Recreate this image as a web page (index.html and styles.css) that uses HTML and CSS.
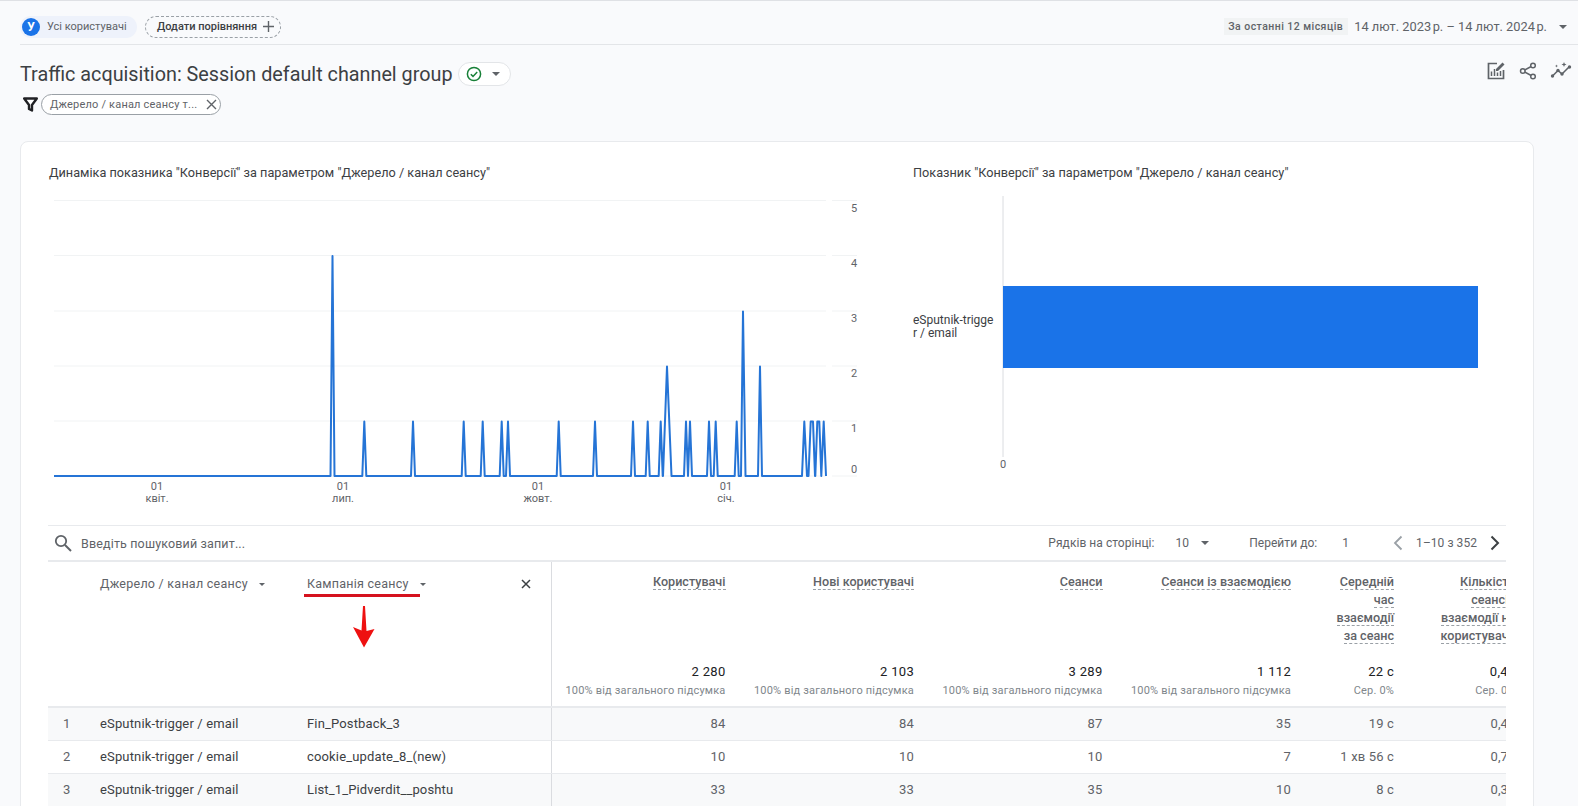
FILE: index.html
```html
<!DOCTYPE html>
<html lang="uk">
<head>
<meta charset="utf-8">
<title>Traffic acquisition</title>
<link rel="stylesheet" href="styles.css">
</head>
<body>
<header class="topbar">
  <div class="chip-user"><span class="avatar">У</span><span>Усі користувачі</span></div>
  <div class="chip-add"><span>Додати порівняння</span>
    <svg class="plus" width="11" height="11" viewBox="0 0 11 11"><path d="M5.500 0v11M0 5.500h11" stroke="#5f6368" stroke-width="1.400" fill="none"/></svg>
  </div>
  <div class="dates">
    <span class="period">За останні 12 місяців</span>
    <span class="range">14 лют. 2023&#8239;р. – 14 лют. 2024&#8239;р.</span>
    <span class="caret"></span>
  </div>
</header>

<section class="titlebar">
  <h1 class="title">Traffic acquisition: Session default channel group</h1>
  <div class="status">
    <svg width="16" height="16" viewBox="0 0 16 16"><circle cx="8" cy="8" r="6.600" fill="none" stroke="#188038" stroke-width="1.500"/><path d="M4.800 8.200l2.200 2.200 4.200-4.400" fill="none" stroke="#188038" stroke-width="1.500"/></svg>
    <span class="caret"></span>
  </div>
  <div class="actions">
    <svg width="20" height="20" viewBox="0 0 20 20"><path d="M11 2.500H2.500v15h15V9" fill="none" stroke="#5f6368" stroke-width="1.700"/><path d="M5.500 10.500v4.500M8.500 8v7M11.500 11.500V15M14.500 10v5" stroke="#5f6368" stroke-width="1.500" fill="none"/><path d="M10 8l6.500-6.500 2 2L12 10h-2z" fill="#5f6368"/></svg>
    <svg width="18" height="20" viewBox="0 0 18 20"><path d="M14 4.500L4 10l10 5.500" fill="none" stroke="#5f6368" stroke-width="1.500"/><circle cx="14" cy="4.500" r="2.300" fill="#f9fafc" stroke="#5f6368" stroke-width="1.500"/><circle cx="3.800" cy="10" r="2.300" fill="#f9fafc" stroke="#5f6368" stroke-width="1.500"/><circle cx="14" cy="15.500" r="2.300" fill="#f9fafc" stroke="#5f6368" stroke-width="1.500"/></svg>
    <svg width="22" height="20" viewBox="0 0 22 20"><path d="M2.500 15l5.500-5.500 4 3.500 7-7" fill="none" stroke="#5f6368" stroke-width="1.600"/><circle cx="2.500" cy="15" r="1.700" fill="#5f6368"/><circle cx="8" cy="9.500" r="1.700" fill="#5f6368"/><circle cx="12" cy="13" r="1.700" fill="#5f6368"/><circle cx="19.500" cy="6" r="1.700" fill="#5f6368"/><path d="M14 1l.7 1.800 1.800.7-1.800.7-.7 1.800-.7-1.800-1.800-.7 1.800-.7zM6.500 3.500l.4 1.100 1.100.4-1.100.4-.4 1.100-.4-1.100L5 5l1.100-.4z" fill="#5f6368"/></svg>
  </div>
</section>

<div class="filterbar">
  <svg width="15" height="15" viewBox="0 0 15 15"><path d="M1.200 1.500h12.600L9 8v5.500l-3-1.500V8z" fill="#fff" stroke="#202124" stroke-width="2.400" stroke-linejoin="round"/></svg>
  <div class="chip-filter">
    <span>Джерело / канал сеансу т...</span>
    <svg width="11" height="11" viewBox="0 0 11 11"><path d="M1 1l9 9M10 1l-9 9" stroke="#5f6368" stroke-width="1.400"/></svg>
  </div>
</div>

<main class="card">
  <div class="charts">
    <section class="panel panel-line">
      <h2 class="chart-title">Динаміка показника "Конверсії" за параметром "Джерело / канал сеансу"</h2>
      <svg class="chart" width="865" height="343" viewBox="48 182 865 343">
        <g class="grid">
          <path d="M54 200.500H826M54 255.500H826M54 311H826M54 366H826M54 421H826M54 476H826"/>
          <path d="M832 200.500H857M832 255.500H857M832 311H857M832 366H857M832 421H857M832 476H857"/>
        </g>
        <path class="series" d="M54 476H330.500L332.500 256L334.500 476H362.300L364.300 421.500L366.300 476H411L413 421.500L415 476H461.700L463.700 421.500L465.700 476H480.700L482.700 421.500L484.700 476H499.700L501.700 421.500L503.700 476H506L508 421.500L510 476H556.700L558.700 421.500L560.700 476H593L595 421.500L597 476H631L633 421.500L635 476H645.700L647.700 421.500L649.700 476H658.700L660.700 421.500L662.700 476H663L667 366.500L671.500 476H684L686 421.500L688 476L690 421.500L692 476H707L709 421.500L711 476H713.700L715.700 421.500L717.700 476H734.700L736.700 421.500L738.700 476H741L743 311.500L745.500 476H758L760 366.500L762 476H802L804.300 421.500L807 476H808.500L810.700 421.500H813L815 476H815.300L817.300 421.500H819.300L821.300 476L823.700 421.500L826 476"/>
        <g class="axis-y">
          <text x="854" y="212">5</text><text x="854" y="267">4</text><text x="854" y="322">3</text><text x="854" y="377">2</text><text x="854" y="432">1</text><text x="854" y="473">0</text>
        </g>
        <g class="axis-x">
          <text x="157" y="490">01</text><text x="157" y="502">квіт.</text>
          <text x="343" y="490">01</text><text x="343" y="502">лип.</text>
          <text x="538" y="490">01</text><text x="538" y="502">жовт.</text>
          <text x="726" y="490">01</text><text x="726" y="502">січ.</text>
        </g>
      </svg>
    </section>
    <section class="panel panel-bar">
      <h2 class="chart-title">Показник "Конверсії" за параметром "Джерело / канал сеансу"</h2>
      <svg class="chart" width="593" height="343" viewBox="913 182 593 343">
        <path class="axis-line" d="M1003 196V457"/>
        <rect class="bar" x="1003" y="286" width="475" height="82"/>
        <text class="bar-label" x="913" y="324">eSputnik-trigge</text>
        <text class="bar-label" x="913" y="337">r / email</text>
        <text class="bar-zero" x="1003" y="468">0</text>
      </svg>
    </section>
  </div>

  <div class="tablebar">
    <svg class="search" width="18" height="18" viewBox="0 0 18 18"><circle cx="7" cy="7" r="5.200" fill="none" stroke="#5f6368" stroke-width="1.800"/><path d="M11 11l6 6" stroke="#5f6368" stroke-width="2"/></svg>
    <span class="search-text">Введіть пошуковий запит...</span>
    <div class="pager">
      <span class="pager-label">Рядків на сторінці:</span>
      <span class="pager-size">10</span><span class="caret caret-dark"></span>
      <span class="pager-jump">Перейти до:</span>
      <span class="pager-page">1</span>
      <svg class="pager-prev" width="10" height="16" viewBox="0 0 10 16"><path d="M8.500 1.500L2 8l6.500 6.500" fill="none" stroke="#9aa0a6" stroke-width="1.800"/></svg>
      <span class="pager-count">1–10 з 352</span>
      <svg class="pager-next" width="10" height="16" viewBox="0 0 10 16"><path d="M1.500 1.500L8 8l-6.500 6.500" fill="none" stroke="#3c4043" stroke-width="2"/></svg>
    </div>
  </div>

  <div class="table-wrap">
    <table class="table">
      <colgroup>
        <col class="c-num"><col class="c-src"><col class="c-camp"><col class="c-m1"><col class="c-m2"><col class="c-m2"><col class="c-m2"><col class="c-m3"><col class="c-m4">
      </colgroup>
      <thead>
        <tr>
          <th></th>
          <th class="dim"><span>Джерело / канал сеансу</span><span class="caret"></span></th>
          <th class="dim dim-last"><span>Кампанія сеансу</span><span class="caret"></span>
            <svg class="close" width="10" height="10" viewBox="0 0 10 10"><path d="M1 1l8 8M9 1l-8 8" stroke="#3c4043" stroke-width="1.500"/></svg>
          </th>
          <th class="metric"><div class="label"><span>Користувачі</span></div><div class="total">2 280</div><div class="sub">100% від загального підсумка</div></th>
          <th class="metric"><div class="label"><span>Нові користувачі</span></div><div class="total">2 103</div><div class="sub">100% від загального підсумка</div></th>
          <th class="metric"><div class="label"><span>Сеанси</span></div><div class="total">3 289</div><div class="sub">100% від загального підсумка</div></th>
          <th class="metric"><div class="label"><span>Сеанси із взаємодією</span></div><div class="total">1 112</div><div class="sub">100% від загального підсумка</div></th>
          <th class="metric"><div class="label"><span>Середній<br>час<br>взаємодії<br>за сеанс</span></div><div class="total">22 с</div><div class="sub">Сер. 0%</div></th>
          <th class="metric"><div class="label"><span>Кількість<br>сеансів<br>взаємодії на<br>користувача</span></div><div class="total">0,49</div><div class="sub">Сер. 0%</div></th>
        </tr>
      </thead>
      <tbody>
        <tr class="row-a"><td class="num">1</td><td class="txt">eSputnik-trigger / email</td><td class="txt last">Fin_Postback_3</td><td class="val">84</td><td class="val">84</td><td class="val">87</td><td class="val">35</td><td class="val">19 с</td><td class="val">0,42</td></tr>
        <tr class="row-b"><td class="num">2</td><td class="txt">eSputnik-trigger / email</td><td class="txt last">cookie_update_8_(new)</td><td class="val">10</td><td class="val">10</td><td class="val">10</td><td class="val">7</td><td class="val">1 хв 56 с</td><td class="val">0,70</td></tr>
        <tr class="row-a"><td class="num">3</td><td class="txt">eSputnik-trigger / email</td><td class="txt last">List_1_Pidverdit__poshtu</td><td class="val">33</td><td class="val">33</td><td class="val">35</td><td class="val">10</td><td class="val">8 с</td><td class="val">0,30</td></tr>
      </tbody>
    </table>
    <div class="mark-line"></div>
    <svg class="mark-arrow" width="24" height="42" viewBox="0 0 24 42"><path d="M11 0h2l1.500 25 8 -2L12 41.500 1 21l8.500 3.500z" fill="#ee1111"/></svg>
  </div>
</main>
</body>
</html>
```
FILE: styles.css
```css
* { box-sizing: border-box; }
html, body { margin: 0; padding: 0; }
body {
  width: 1578px;
  height: 806px;
  overflow: hidden;
  background: #f9fafc;
  border-top: 1px solid #dfe1e5;
  font-family: Roboto, "Liberation Sans", sans-serif;
  color: #3c4043;
}
h1, h2 { margin: 0; font-weight: 400; }
svg { display: block; flex: none; }

.caret {
  display: inline-block;
  width: 0;
  height: 0;
  border-left: 4px solid transparent;
  border-right: 4px solid transparent;
  border-top: 4px solid #5f6368;
}

/* top strip */
.topbar {
  height: 44px;
  margin-left: 20px;
  border-bottom: 1px solid #e3e5e8;
  display: flex;
  align-items: center;
  padding-top: 8px;
}
.chip-user {
  width: 117px;
  height: 22px;
  border-radius: 11px;
  background: #eef2fb;
  display: flex;
  align-items: center;
  gap: 7px;
  padding-left: 2px;
  font-size: 11px;
  color: #5f6368;
  white-space: nowrap;
}
.avatar {
  width: 18px;
  height: 18px;
  border-radius: 50%;
  background: #1a73e8;
  color: #fff;
  font-size: 12px;
  font-weight: 700;
  display: flex;
  align-items: center;
  justify-content: center;
}
.chip-add {
  margin-left: 8px;
  width: 136px;
  height: 22px;
  border: 1px dashed #9aa0a6;
  border-radius: 11px;
  display: flex;
  align-items: center;
  gap: 6px;
  padding-left: 11px;
  font-size: 11px;
  font-weight: 500;
  color: #3c4043;
  white-space: nowrap;
}
.dates {
  margin-left: auto;
  display: flex;
  align-items: center;
  padding-right: 11px;
}
.period {
  background: #f1f3f4;
  padding: 0 5px 0 4px;
  height: 17px;
  line-height: 17px;
  font-size: 10.500px;
  font-weight: 500;
  letter-spacing: 0.45px;
  color: #5f6368;
  white-space: nowrap;
}
.range {
  margin-left: 6px;
  margin-right: 12px;
  font-size: 12.800px;
  color: #5f6368;
  white-space: nowrap;
}

/* title */
.titlebar {
  margin: 17px 6px 0 20px;
  height: 24px;
  display: flex;
  align-items: center;
}
.title {
  font-size: 19.800px;
  color: #3c4043;
  white-space: nowrap;
}
.status {
  margin-left: 5px;
  width: 53px;
  height: 24px;
  border: 1px solid #e3e5e8;
  border-radius: 12px;
  background: #fff;
  display: flex;
  align-items: center;
  gap: 10px;
  padding-left: 7px;
}
.actions {
  margin-left: auto;
  margin-bottom: 6px;
  display: flex;
  align-items: center;
  gap: 13px;
}

/* filter */
.filterbar {
  margin: 8px 0 0 23px;
  height: 21px;
  display: flex;
  align-items: center;
  gap: 3px;
}
.chip-filter {
  width: 180px;
  height: 21px;
  border: 1px solid #9aa0a6;
  border-radius: 11px;
  background: #fff;
  display: flex;
  align-items: center;
  justify-content: space-between;
  padding: 0 3px 0 8px;
  font-size: 11px;
  letter-spacing: 0.2px;
  color: #5f6368;
}

/* card */
.card {
  margin: 26px 0 0 20px;
  width: 1514px;
  height: 700px;
  background: #fff;
  border: 1px solid #e8eaed;
  border-radius: 8px;
  padding: 0 27px;
}
.charts { display: flex; height: 383px; }
.panel { padding-top: 22px; }
.panel-line { width: 865px; flex: none; }
.panel-line .chart-title { padding-left: 1px; }
.panel-bar { flex: 1; min-width: 0; }
.chart-title {
  height: 18px;
  line-height: 18px;
  font-size: 12.700px;
  color: #3c4043;
  white-space: nowrap;
}
.grid path { stroke: #f1f3f4; stroke-width: 1; fill: none; }
.series { fill: none; stroke: #2574d6; stroke-width: 2; stroke-linejoin: round; }
.axis-y text, .axis-x text, .bar-zero {
  font-size: 11px;
  fill: #5f6368;
  text-anchor: middle;
}
.axis-line { stroke: #dadce0; stroke-width: 1; fill: none; }
.bar { fill: #1a73e8; }
.bar-label { font-size: 12px; fill: #3c4043; }

/* table toolbar */
.tablebar {
  height: 37px;
  width: 1458px;
  border-top: 1px solid #e8eaed;
  border-bottom: 2px solid #e8eaed;
  display: flex;
  align-items: center;
  padding-left: 6px;
  font-size: 12.500px;
  color: #5f6368;
}
.search-text { margin-left: 9px; letter-spacing: 0.15px; }
.pager {
  margin-left: auto;
  display: flex;
  align-items: center;
  padding-right: 6px;
  font-size: 12px;
  letter-spacing: 0.05px;
}
.pager-size { margin-left: 21px; }
.caret-dark { margin-left: 12px; }
.pager-jump { margin-left: 40px; }
.pager-page { margin-left: 25px; }
.pager-prev { margin-left: 44px; }
.pager-count { margin-left: 13px; }
.pager-next { margin-left: 13px; }

/* table */
.table-wrap { width: 1458px; height: 300px; overflow: hidden; position: relative; }
.table { table-layout: fixed; width: 1467.500px; border-collapse: collapse; }
.c-num { width: 52px; }
.c-src { width: 207px; }
.c-camp { width: 244px; }
.c-m1 { width: 174.500px; }
.c-m2 { width: 188.500px; }
.c-m3 { width: 103px; }
.c-m4 { width: 121.500px; }
.table th {
  height: 145px;
  padding: 11px 0 0;
  vertical-align: top;
  font-weight: 400;
  border-bottom: 2px solid #e8eaed;
}
.table th.dim {
  padding-top: 14px;
  font-size: 12.500px;
  letter-spacing: 0.25px;
  color: #5f6368;
  text-align: left;
  white-space: nowrap;
}
.dim .caret {
  margin-left: 11px;
  vertical-align: 2px;
  border-left-width: 3.500px;
  border-right-width: 3.500px;
  border-top-width: 3.500px;
}
.dim-last { border-right: 1px solid #dadce0; position: relative; }
.close { position: absolute; left: 214px; top: 17px; }
.metric { text-align: right; }
.label {
  height: 90px;
  font-size: 12.600px;
  font-weight: 500;
  line-height: 18px;
  color: #5f6368;
  white-space: nowrap;
}
.label span { border-bottom: 1px dashed #9aa0a6; }
.total {
  height: 20px;
  line-height: 18px;
  font-size: 13px;
  letter-spacing: 0.3px;
  color: #202124;
}
.sub {
  line-height: 16px;
  font-size: 11px;
  letter-spacing: 0.18px;
  color: #80868b;
  white-space: nowrap;
}
.table td {
  height: 33px;
  padding: 0;
  font-size: 13px;
  letter-spacing: 0.15px;
  border-bottom: 1px solid #e8eaed;
  white-space: nowrap;
}
.row-a td { background: #f8f9fa; }
.row-b td { background: #fff; }
.table td.num { text-align: left; padding-left: 15px; color: #5f6368; }
.txt { color: #3c4043; }
.table td.last { border-right: 1px solid #dadce0; }
.val { text-align: right; color: #5f6368; }

/* annotation drawn over the header */
.mark-line {
  position: absolute;
  left: 256px;
  top: 32px;
  width: 116px;
  height: 3px;
  background: #d5121e;
}
.mark-arrow { position: absolute; left: 304px; top: 44px; }
```
